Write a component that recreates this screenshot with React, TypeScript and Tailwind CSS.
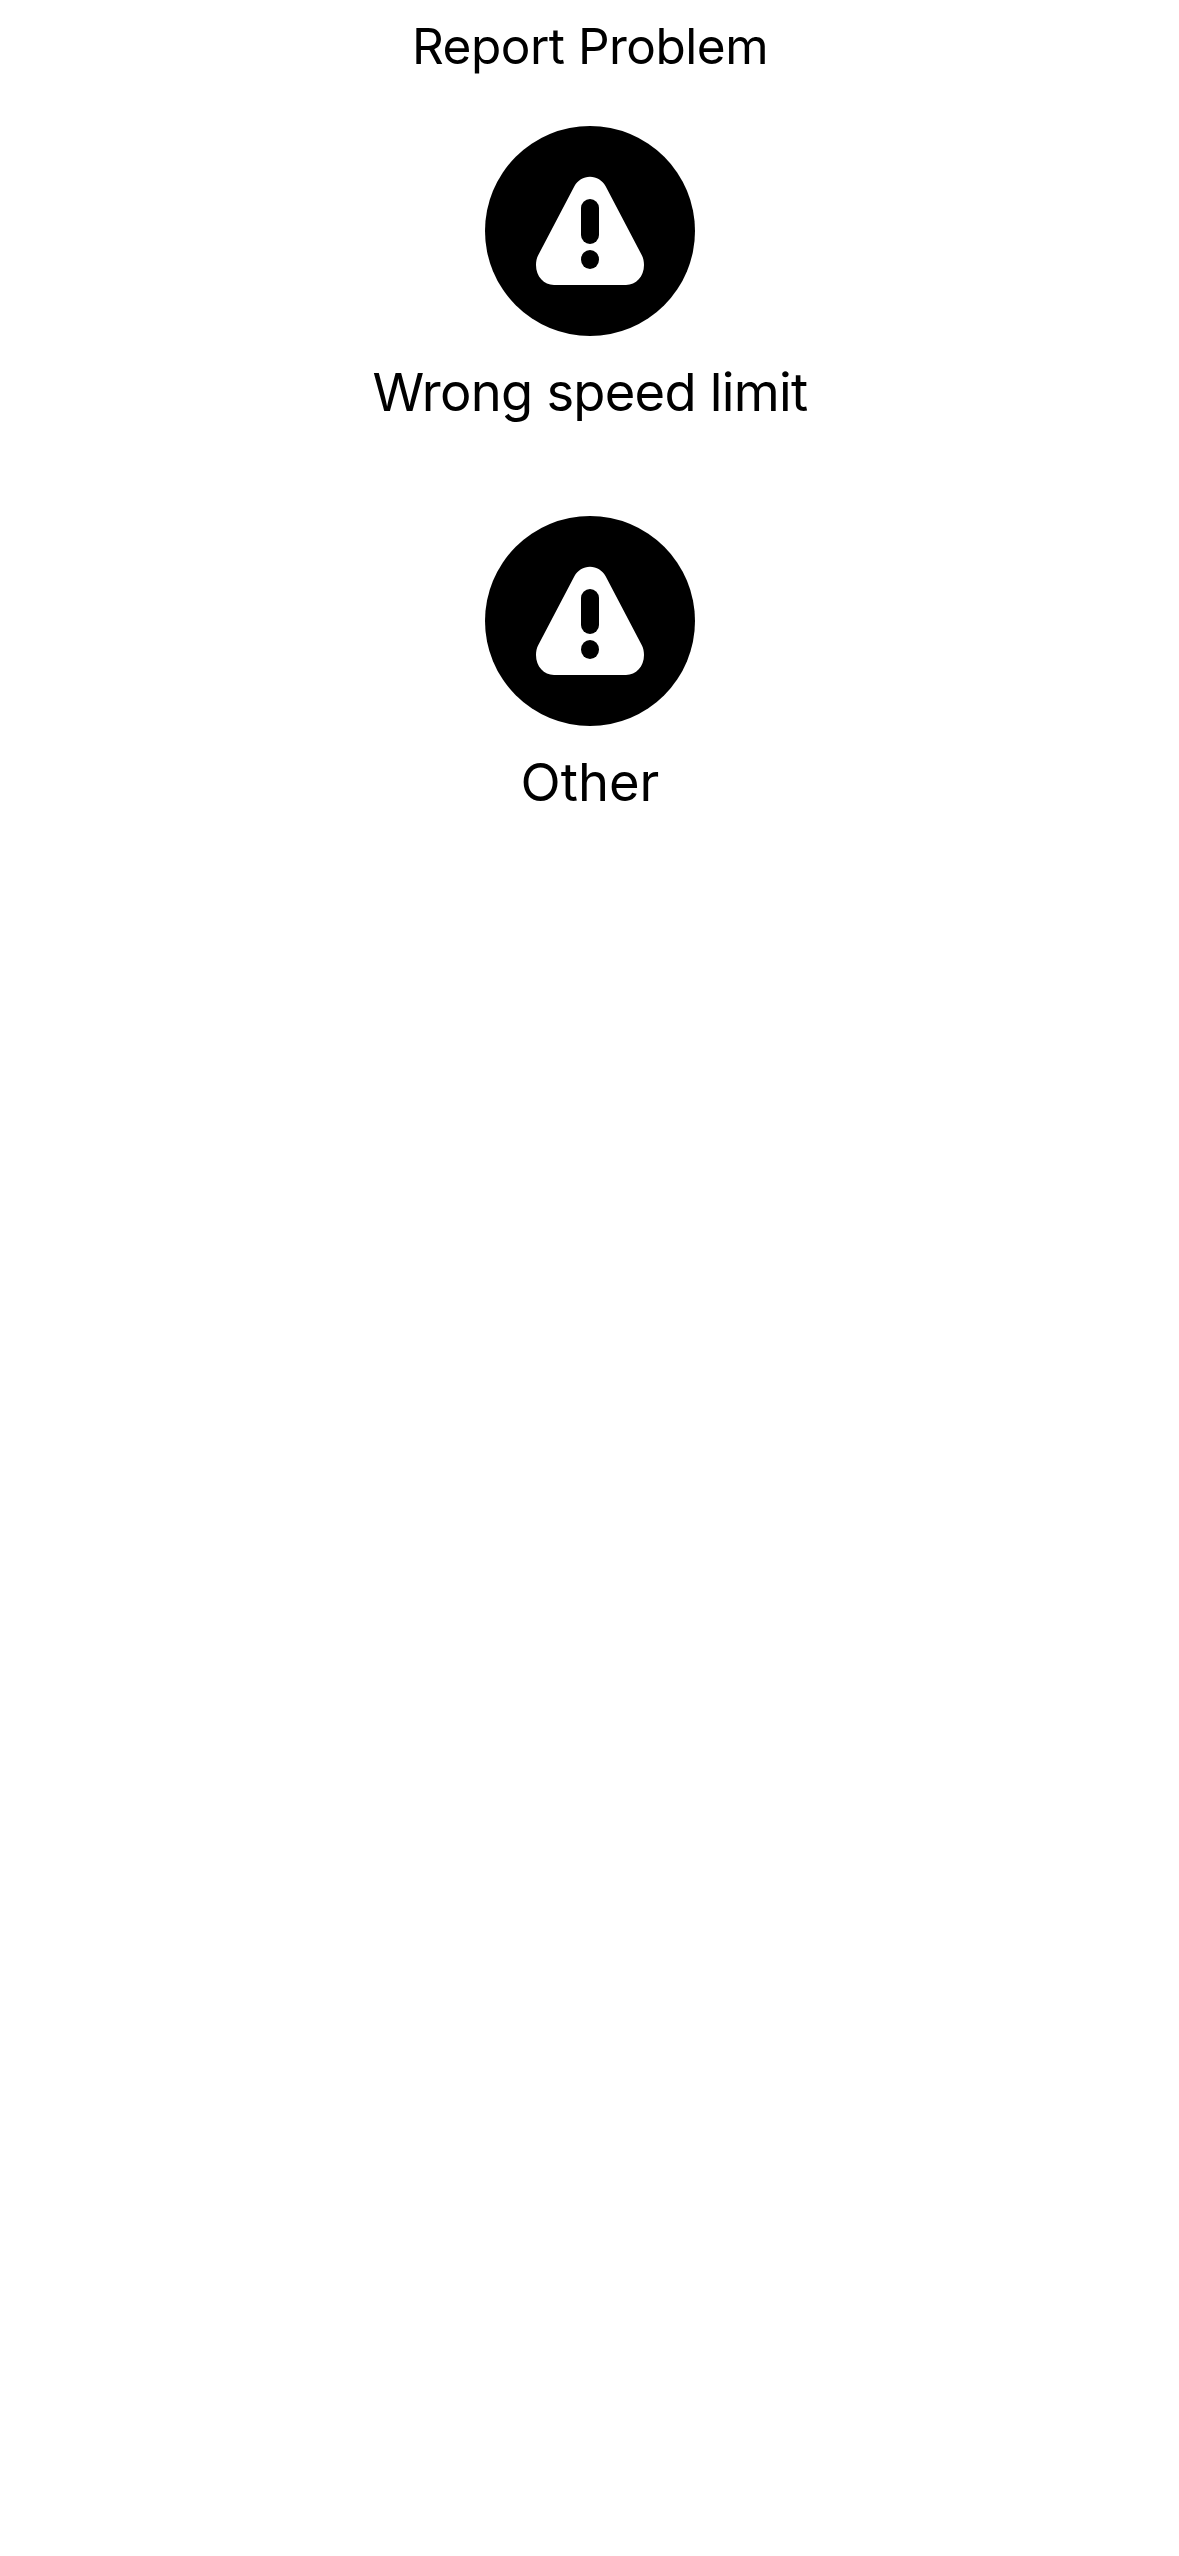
function WarningIcon() {
  return (
    <svg viewBox="0 0 210 210" className="size-[210px]" aria-hidden="true">
      <circle cx="105" cy="105" r="105" fill="#000" />
      <path
        d="M89.5 60C92.5 54.5 98.5 50.7 105 50.7C111.500 50.7 117.500 54.5 120.500 60L156.700 129C158.300 132 159 135.500 159 139C159 150.500 151 159 141 159H69C59 159 51 150.500 51 139C51 135.500 51.700 132 53.300 129Z"
        fill="#fff"
      />
      <rect x="96" y="73" width="18" height="45" rx="9" fill="#000" />
      <ellipse cx="105" cy="133.500" rx="9" ry="9.500" fill="#000" />
    </svg>
  );
}

function ReportOption({ label, tracking }: { label: string; tracking: string }) {
  return (
    <button type="button" className="flex h-[390px] flex-col items-center">
      <WarningIcon />
      <span className={`mt-[23px] text-[52.5px] leading-[66px] whitespace-nowrap ${tracking}`}>{label}</span>
    </button>
  );
}

export default function App() {
  return (
    <main className="flex min-h-screen flex-col items-center bg-white pl-px font-['Inter',sans-serif] text-black">
      <h1 className="mt-[16px] text-[49.5px] leading-[60px] tracking-[-0.5px] whitespace-nowrap">Report Problem</h1>
      <div className="mt-[50px] flex flex-col items-center">
        <ReportOption label="Wrong speed limit" tracking="tracking-[-0.75px]" />
        <ReportOption label="Other" tracking="tracking-normal" />
      </div>
    </main>
  );
}
